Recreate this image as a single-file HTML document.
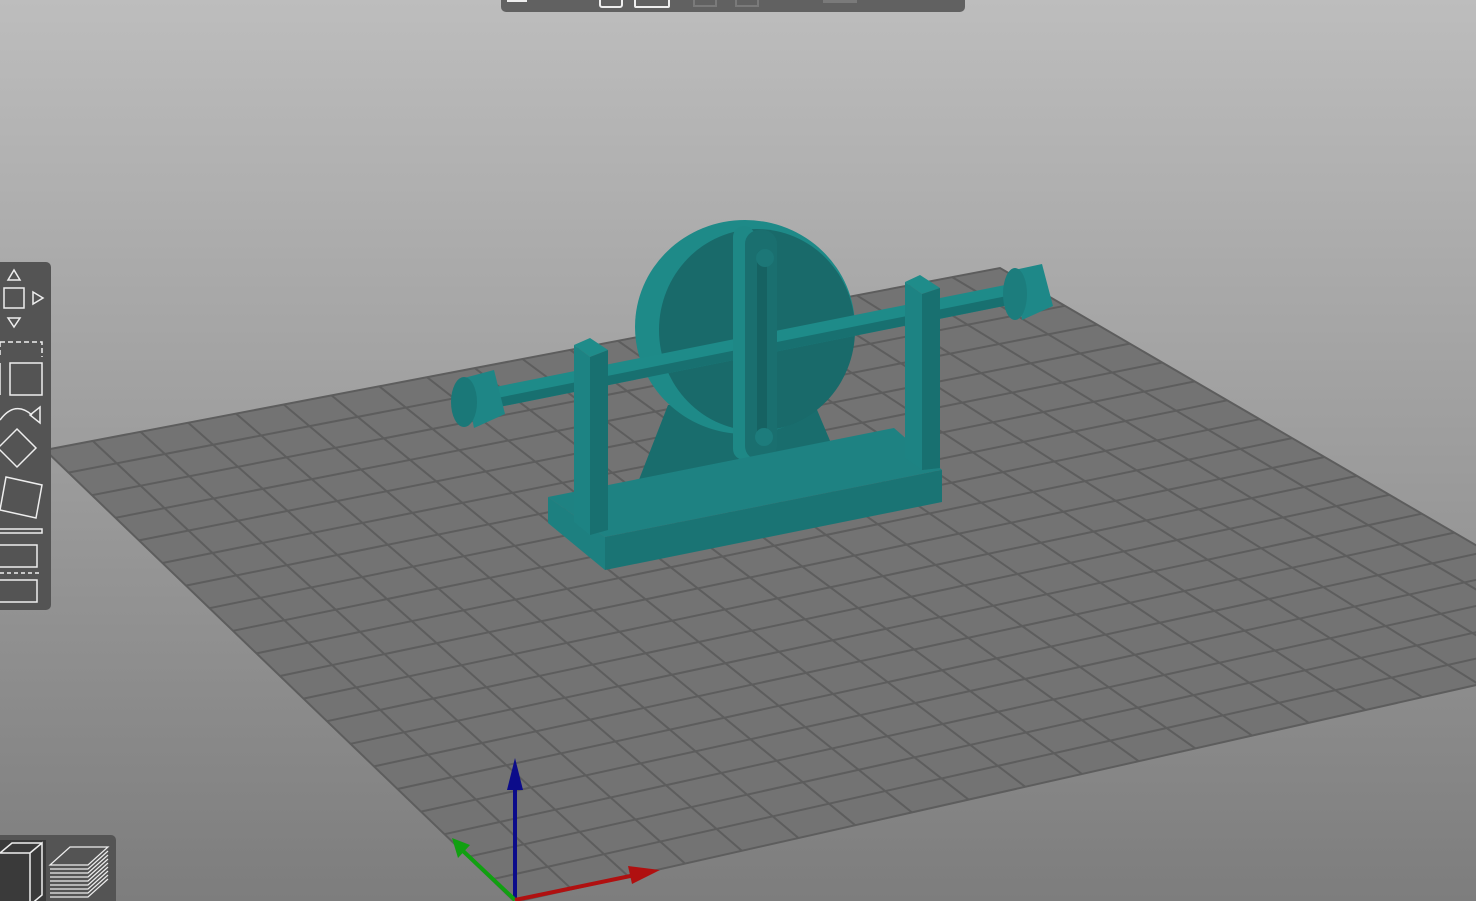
<!DOCTYPE html>
<html><head><style>
html,body{margin:0;padding:0;width:1476px;height:901px;overflow:hidden;background:linear-gradient(#bdbdbd,#7d7d7d);font-family:"Liberation Sans",sans-serif;position:relative}
svg{position:absolute;left:0;top:0}
</style></head><body>
<svg id="s" width="1476" height="901" viewBox="0 0 1476 901">
<polygon points="45,450 1000,268 1649,646 515,902" fill="#737373"/>
<g id="grid" stroke="#5d5d5d" stroke-width="2" fill="none"></g>
<polygon points="45,450 1000,268 1649,646 515,902" fill="none" stroke="#5d5d5d" stroke-width="2"/>
<line x1="515" y1="900" x2="515" y2="785" stroke="#0c0c8a" stroke-width="4"/>
<polygon points="507,790 515,758 523,790" fill="#0c0c8a"/>
<line x1="515" y1="900" x2="462" y2="850" stroke="#11a011" stroke-width="4"/>
<polygon points="452,838 470,845 458,858" fill="#11a011"/>
<line x1="515" y1="900" x2="640" y2="874" stroke="#b01010" stroke-width="4"/>
<polygon points="628,866 660,870 632,884" fill="#b01010"/>
<polygon points="633,495 668,405 815,405 836,455" fill="#196d6d"/>
<ellipse cx="745" cy="327" rx="110" ry="107" fill="#1e8a88"/>
<ellipse cx="757" cy="330" rx="98" ry="101" fill="#196a6a"/>
<!-- axle -->
<polygon points="470,392 1030,280 1034,300 474,412" fill="#1e8b89"/>
<polygon points="472,403 1032,291 1034,300 474,412" fill="#187070"/>
<!-- slot bar in front -->
<rect x="733" y="226" width="22" height="234" rx="11" fill="#1e8886"/>
<rect x="745" y="230" width="32" height="230" rx="14" fill="#1a6f6f"/>
<rect x="757" y="250" width="10" height="195" rx="5" fill="#166262"/>
<circle cx="765" cy="258" r="9" fill="#1c7777"/>
<circle cx="764" cy="437" r="9" fill="#1d7c7c"/>
<!-- base -->
<polygon points="548,497 894,428 942,470 605,537" fill="#1e8282"/>
<polygon points="548,497 605,537 605,570 548,523" fill="#1d8080"/>
<polygon points="605,537 942,470 942,502 605,570" fill="#1a7474"/>
<!-- left cap -->
<polygon points="464,378 494,370 505,414 474,428" fill="#1e8686"/>
<ellipse cx="464" cy="402" rx="13" ry="25" fill="#1a7878"/>
<!-- right cap -->
<polygon points="1014,270 1042,264 1053,306 1022,320" fill="#1e8888"/>
<ellipse cx="1015" cy="294" rx="12" ry="26" fill="#1c7d7d"/>
<!-- left post -->
<polygon points="574,345 590,338 608,350 590,357" fill="#1f8c8a"/>
<polygon points="574,345 590,357 590,535 574,522" fill="#1d8383"/>
<polygon points="590,357 608,350 608,530 590,535" fill="#187070"/>
<!-- right post -->
<polygon points="905,282 920,275 940,288 922,294" fill="#1f8c8a"/>
<polygon points="905,282 922,294 922,470 905,458" fill="#1d8383"/>
<polygon points="922,294 940,288 940,468 922,470" fill="#187070"/>
</svg>
<div style="position:absolute;left:501px;top:-8px;width:464px;height:20px;background:#616161;border-radius:5px"></div>
<div style="position:absolute;left:507px;top:-2px;width:20px;height:4px;background:#eee"></div>
<div style="position:absolute;left:599px;top:-6px;width:20px;height:10px;border:2px solid #eee;border-radius:3px"></div>
<div style="position:absolute;left:634px;top:-6px;width:32px;height:10px;border:2px solid #eee;border-radius:2px"></div>
<div style="position:absolute;left:693px;top:-6px;width:20px;height:9px;border:2px solid #7a7a7a"></div>
<div style="position:absolute;left:735px;top:-6px;width:20px;height:9px;border:2px solid #7a7a7a"></div>
<div style="position:absolute;left:823px;top:-2px;width:34px;height:5px;background:#7a7a7a"></div>
<div style="position:absolute;left:-6px;top:262px;width:57px;height:348px;background:#545454;border-radius:5px"></div>
<svg width="60" height="360" style="left:0;top:255px" fill="none" stroke="#eee" stroke-width="1.5">
<polygon points="8,25 14,15 20,25"/><rect x="4" y="33" width="20" height="20"/><polygon points="33,37 43,43 33,49"/><polygon points="8,63 14,72 20,63"/>
<path d="M0,87 H42 V102 M0,100 V87" stroke-dasharray="5,3"/><rect x="10" y="108" width="32" height="32"/><path d="M0,108 V140"/>
<path d="M0,165 Q15,145 32,160"/><polygon points="30,160 40,152 40,168"/><polygon points="17,174 36,193 17,212 -2,193"/>
<polygon points="6,222 42,230 36,263 0,255"/><rect x="-3" y="274" width="45" height="4"/>
<rect x="-3" y="290" width="40" height="22"/><path d="M0,318 H42" stroke-dasharray="4,3"/><rect x="-3" y="325" width="40" height="22"/>
</svg>
<div style="position:absolute;left:-6px;top:835px;width:122px;height:66px;background:#545454;border-radius:5px 5px 0 0"></div>
<div style="position:absolute;left:0;top:840px;width:46px;height:61px;background:#3a3a3a"></div>
<svg width="120" height="66" style="left:0;top:835px" fill="none" stroke="#eee" stroke-width="1.5">
<path d="M0,18 H30 V66 M30,18 L42,8 V60 L30,70 M0,18 L12,8 H42"/>
<g stroke-width="1.2"><path d="M50,30 L70,12 H108 L88,30 Z M50,34 L88,34 L108,16 M50,38 L88,38 L108,20 M50,42 L88,42 L108,24 M50,46 L88,46 L108,28 M50,50 L88,50 L108,32 M50,54 L88,54 L108,36 M50,58 L88,58 L108,40 M50,62 L88,62 L108,44"/></g>
</svg>
<script>
var g=document.getElementById('grid'),A=[45,450],B=[1000,268],C=[1649,646],D=[515,902],N=20;
function L(p,q,t){return [p[0]+(q[0]-p[0])*t,p[1]+(q[1]-p[1])*t]}
var h='';
for(var i=1;i<N;i++){var t=i/N;var p=L(A,B,t),q=L(D,C,t);h+='<line x1="'+p[0]+'" y1="'+p[1]+'" x2="'+q[0]+'" y2="'+q[1]+'"/>';p=L(A,D,t);q=L(B,C,t);h+='<line x1="'+p[0]+'" y1="'+p[1]+'" x2="'+q[0]+'" y2="'+q[1]+'"/>';}
g.innerHTML=h;
</script>
</body></html>
